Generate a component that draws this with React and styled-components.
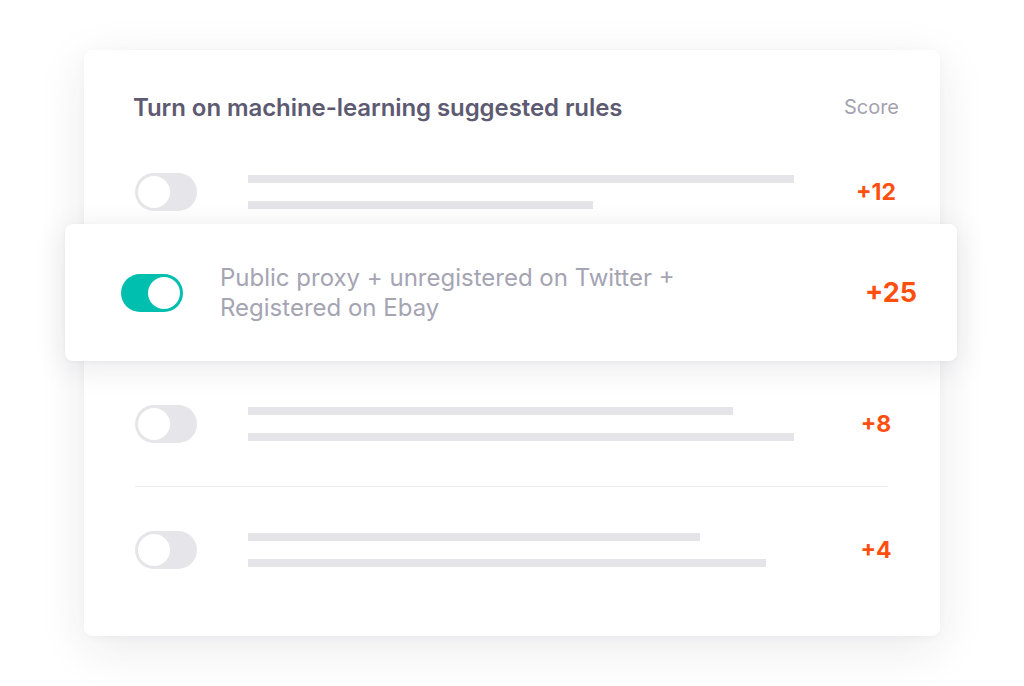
import styled, { createGlobalStyle } from "styled-components";

const GlobalStyle = createGlobalStyle`
  html, body {
    margin: 0;
    padding: 0;
    background: #ffffff;
    font-family: "Inter", "Liberation Sans", sans-serif;
  }
  * { box-sizing: border-box; }
`;

const Page = styled.div`
  width: 1024px;
  height: 686px;
  display: flex;
  align-items: center;
  justify-content: center;
`;

const Card = styled.div`
  width: 856px;
  background: #ffffff;
  border-radius: 8px;
  box-shadow: 0 12px 50px rgba(30, 30, 60, 0.09), 0 2px 8px rgba(30, 30, 60, 0.03);
  padding: 44px 0 67px;
  display: flex;
  flex-direction: column;
`;

const Header = styled.div`
  display: flex;
  align-items: center;
  justify-content: space-between;
  padding: 0 41px 0 49px;
  height: 26px;
`;

const Title = styled.h2`
  margin: 0;
  font-size: 24px;
  font-weight: 600;
  color: #5d5a72;
  letter-spacing: -0.08px;
`;

const ScoreLabel = styled.span`
  font-size: 20px;
  color: #a3a2b0;
`;

const Row = styled.div`
  display: flex;
  align-items: center;
  height: 38px;
  margin-top: ${(p) => p.top}px;
  padding: 0 40px 0 51px;
`;

const Toggle = styled.div`
  flex: none;
  position: relative;
  width: 62px;
  height: 38px;
  border-radius: 19px;
  background: ${(p) => (p.on ? "#00bfae" : "#e5e5ea")};

  &::after {
    content: "";
    position: absolute;
    top: 3px;
    left: ${(p) => (p.on ? "27px" : "3px")};
    width: 32px;
    height: 32px;
    border-radius: 50%;
    background: #ffffff;
  }
`;

const Bars = styled.div`
  flex: 1;
  margin-left: 51px;
  display: flex;
  flex-direction: column;
  gap: 18px;
`;

const Bar = styled.div`
  height: 8px;
  background: #e4e4e9;
`;

const Score = styled.span`
  flex: none;
  margin-left: auto;
  width: ${(p) => (p.big ? 60 : 48)}px;
  text-align: center;
  font-weight: 700;
  font-size: ${(p) => (p.big ? 27 : 23)}px;
  color: #ff4f0f;
`;

const Raised = styled.div`
  margin: 13px -17px 0 -19px;
  height: 137px;
  background: #ffffff;
  border-radius: 8px;
  box-shadow: 0 6px 32px rgba(30, 30, 60, 0.1), 0 1px 4px rgba(30, 30, 60, 0.04);
  display: flex;
  align-items: center;
  padding: 0 36px 0 56px;
`;

const RuleText = styled.p`
  flex: 0 1 480px;
  margin: 0 0 0 37px;
  font-size: 24px;
  line-height: 30px;
  color: #a5a4b3;
`;

const Divider = styled.div`
  height: 1px;
  background: #ececf0;
  margin: 43px 52px 0 51px;
`;

const BarRow = ({ top, bars, score }) => (
  <Row top={top}>
    <Toggle />
    <Bars>
      {bars.map((w, i) => (
        <Bar key={i} style={{ width: w }} />
      ))}
    </Bars>
    <Score>{score}</Score>
  </Row>
);

export default function App() {
  return (
    <Page>
      <GlobalStyle />
      <Card>
        <Header>
          <Title>Turn on machine-learning suggested rules</Title>
          <ScoreLabel>Score</ScoreLabel>
        </Header>
        <BarRow top={53} bars={[546, 345]} score="+12" />
        <Raised>
          <Toggle on />
          <RuleText>Public proxy + unregistered on Twitter + Registered on Ebay</RuleText>
          <Score big>+25</Score>
        </Raised>
        <BarRow top={44} bars={[485, 546]} score="+8" />
        <Divider />
        <BarRow top={44} bars={[452, 518]} score="+4" />
      </Card>
    </Page>
  );
}
